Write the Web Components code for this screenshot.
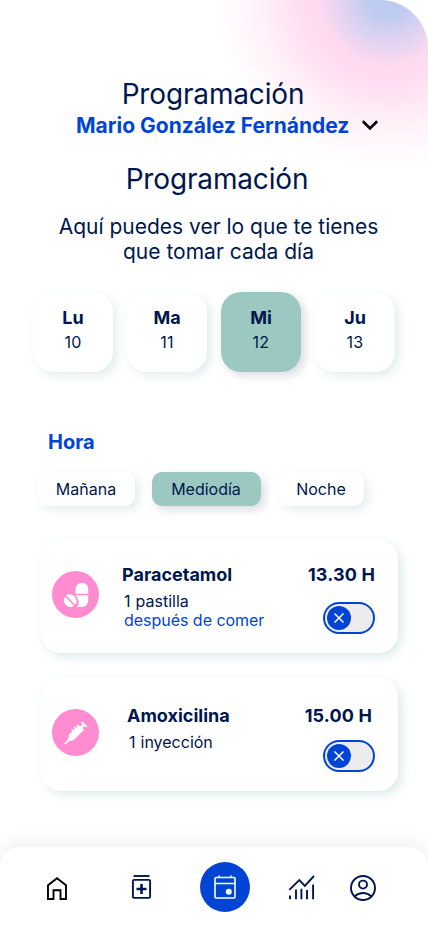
<!DOCTYPE html>
<html lang="es">
<head>
<meta charset="utf-8">
<title>Programación</title>
<style>
html,body{margin:0;padding:0;background:#fff}
body{font-family:Inter,"Liberation Sans",sans-serif;color:#00164e}
</style>
</head>
<body>
<app-screen>
  <app-header heading="Programación" user="Mario González Fernández"></app-header>
  <intro-block heading="Programación">Aquí puedes ver lo que te tienes<br>que tomar cada día</intro-block>
  <day-row>
    <day-card day="Lu" num="10"></day-card>
    <day-card day="Ma" num="11"></day-card>
    <day-card day="Mi" num="12" selected></day-card>
    <day-card day="Ju" num="13"></day-card>
  </day-row>
  <hour-filter label="Hora">
    <hour-chip style="width:97px;margin-right:17px">Mañana</hour-chip>
    <hour-chip selected style="width:109px;margin-right:18px">Mediodía</hour-chip>
    <hour-chip style="width:85px">Noche</hour-chip>
  </hour-filter>
  <dose-list>
    <dose-card name="Paracetamol" time="13.30 H" dose="1 pastilla" note="después de comer" icon="pill"></dose-card>
    <dose-card name="Amoxicilina" time="15.00 H" dose="1 inyección" icon="syringe" style="--name-x:5px;--row-y:28px;--time-pad:26px;--dose-gap:6px"></dose-card>
  </dose-list>
  <nav-bar slot="nav"></nav-bar>
</app-screen>
<script>
class Base extends HTMLElement{
  constructor(){super();this.attachShadow({mode:'open'});}
  connectedCallback(){this.shadowRoot.innerHTML=this.render();}
  at(n){return this.getAttribute(n)||'';}
}
customElements.define('app-screen',class extends Base{render(){return `
<style>
:host{display:flex;flex-direction:column;width:428px;height:926px;overflow:hidden;border-radius:0 48px 0 0;
background:radial-gradient(circle at 388px -4px,#bccaf1 0,#bfcbf1 20px,#ffdaf0 70px,#ffdcf2 84px,#fff2f9 130px,#fff 174px)}
main{flex:1;display:flex;flex-direction:column}
</style><main><slot></slot></main><slot name="nav"></slot>`}});
customElements.define('app-header',class extends Base{render(){return `
<style>
:host{display:block;padding-top:77px}
h1{margin:0;font-size:28px;line-height:34px;font-weight:400;letter-spacing:-.15px;text-align:center;padding-right:2px}
.user{display:flex;align-items:center;margin-top:3px;padding-left:76px;color:#0044d6;font-size:21px;line-height:24px;font-weight:700}
svg{margin:-2px 0 0 12px}
</style><h1>${this.at('heading')}</h1>
<div class="user"><span>${this.at('user')}</span><svg width="18" height="12" viewBox="0 0 18 12" fill="none" stroke="#000" stroke-width="2.7"><path d="M1.8 2.2l7.2 7.2 7.2-7.2"/></svg></div>`}});
customElements.define('intro-block',class extends Base{render(){return `
<style>
:host{display:block;margin-top:24px;text-align:center}
h2{margin:0;font-size:28px;line-height:34px;font-weight:400;letter-spacing:-.15px;padding-left:6px}
p{margin:18px 0 0;font-size:21px;line-height:25px;font-weight:400;padding-left:9px}
</style><h2>${this.at('heading')}</h2><p><slot></slot></p>`}});
customElements.define('day-row',class extends Base{render(){return `
<style>:host{display:flex;gap:14px;margin:28px 0 0 33px}</style><slot></slot>`}});
customElements.define('day-card',class extends Base{render(){return `
<style>
:host{display:block;box-sizing:border-box;width:80px;height:80px;border-radius:20px;background:#fff;padding-top:15px;text-align:center;box-shadow:4px 4px 10px rgba(155,201,193,.3)}
:host([selected]){background:#9bc9c1;box-shadow:4px 4px 10px rgba(0,0,78,.14)}
b{display:block;font-size:18px;line-height:22px;font-weight:700}
span{display:block;font-size:16px;line-height:20px;font-weight:400;letter-spacing:.3px;margin-top:3px}
</style><b>${this.at('day')}</b><span>${this.at('num')}</span>`}});
customElements.define('hour-filter',class extends Base{render(){return `
<style>
:host{display:block;margin:58px 0 0 38px}
h3{margin:0 0 18px 10px;font-size:20px;line-height:24px;font-weight:700;color:#0044d6}
div{display:flex}
</style><h3>${this.at('label')}</h3><div><slot></slot></div>`}});
customElements.define('hour-chip',class extends Base{render(){return `
<style>
:host{display:block;box-sizing:border-box;height:34px;line-height:34px;padding-right:1px;border-radius:10px;background:#fff;text-align:center;font-size:16px;font-weight:400;box-shadow:4px 4px 10px rgba(155,201,193,.3)}
:host([selected]){background:#9bc9c1;box-shadow:4px 4px 10px rgba(0,0,78,.14)}
</style><slot></slot>`}});
customElements.define('dose-list',class extends Base{render(){return `
<style>:host{display:flex;flex-direction:column;gap:24px;margin:33px 30px 0 41px}</style><slot></slot>`}});
const ICONS={
pill:`<svg width="26" height="26" viewBox="0 0 26 26"><path fill="#fff" d="M12.6 11.8V7a6.3 6.3 0 0 1 12.6 0v4.8zM12.6 13.2h12.6v5.6a6.3 6.3 0 0 1-6.3 6.2h-4.8a7.8 7.8 0 0 0-1.5-11.1z"/><path fill="#fff" d="M3 13.6L12.2 22.8A6.6 6.6 0 0 0 3 13.6zM2 14.7L11.1 23.8A6.6 6.6 0 0 1 2 14.7z"/></svg>`,
syringe:`<svg width="26" height="26" viewBox="0 0 26 26"><path fill="#fff" d="M2.2 24.6l-.9-.9 3.9-5 .6-4L9 11.6 16.4 5l4.8 4.8L10.4 20.3l-3.8.6z"/><path fill="none" stroke="#fff" stroke-width="1.5" d="M8.6 9.4l2.6 2.4M11 7l2.6 2.6M13.4 4.8L16 7.4"/><path fill="none" stroke="#fff" stroke-width="3" d="M17.6 8l3.8-3.7"/><path fill="none" stroke="#fff" stroke-width="1.9" d="M18.6 1.8l5.2 5.4"/></svg>`};
customElements.define('dose-card',class extends Base{render(){return `
<style>
:host{display:flex;box-sizing:border-box;height:114px;border-radius:20px;background:#fff;padding-left:11px;box-shadow:4px 4px 10px rgba(155,201,193,.34)}
.disc{width:47px;height:47px;border-radius:50%;background:#ff8bd1;margin-top:32px;display:flex;align-items:center;justify-content:center}
.text{flex:1;margin-left:calc(23px + var(--name-x,0px));padding-top:var(--row-y,25px)}
b{display:block;font-size:18px;line-height:22px;font-weight:700}
.dose,.note{display:block;margin-left:2px;font-size:16px;line-height:19px;font-weight:400}
.dose{margin-top:var(--dose-gap,6px);word-spacing:.5px}
.note{color:#0044d6;letter-spacing:-.03px}
.side{display:flex;flex-direction:column;align-items:flex-end;justify-content:space-between;box-sizing:border-box;padding:var(--row-y,25px) 23px 19px 0}
.side b{letter-spacing:.15px;margin-right:calc(var(--time-pad,23px) - 23px)}
</style>
<div class="disc">${ICONS[this.at('icon')]}</div>
<div class="text"><b>${this.at('name')}</b><span class="dose">${this.at('dose')}</span>${this.at('note')?`<span class="note">${this.at('note')}</span>`:''}</div>
<div class="side"><b>${this.at('time')}</b><toggle-switch></toggle-switch></div>`}});
customElements.define('toggle-switch',class extends Base{render(){return `
<style>
:host{display:flex;align-items:center;box-sizing:border-box;width:52px;height:32px;border:2px solid #0044d6;border-radius:16px;background:#ececec;padding-left:2px}
i{display:flex;width:24px;height:24px;border-radius:50%;background:#0044d6}
</style><i><svg width="24" height="24" viewBox="0 0 24 24" stroke="#fff" stroke-width="1.5"><path d="M7.5 7.5l9 9M16.5 7.5l-9 9"/></svg></i>`}});
customElements.define('nav-bar',class extends Base{render(){return `
<style>
:host{display:grid;height:79px;box-sizing:border-box;background:#fff;border-radius:20px 20px 0 0;box-shadow:0 -4px 20px rgba(0,0,0,.07);padding-top:15px;grid-template-columns:46px 85px 69px 88px 62px 1fr}
a{display:flex;align-items:center;height:50px}
.cell{grid-row:1}
.disc{width:50px;border-radius:50%;background:#0044d6;justify-content:center}
svg{display:block;flex:none}
</style>
<a class="cell" style="grid-column:2;height:52px"><svg width="22" height="26" viewBox="0 0 22 26" fill="none" stroke="#000" stroke-width="1.9"><path d="M2 24V10.3L11 3.2l9 7.1V24h-5.5v-8.7h-7V24z"/></svg></a>
<a class="cell" style="grid-column:3"><svg width="21" height="26" viewBox="0 0 21 26" fill="none" stroke="#00164e" stroke-width="1.9"><path d="M2.5 2h16"/><rect x="1.9" y="5.9" width="17.2" height="18" rx="1.2"/><path d="M10.5 10v10M5.5 15h10" stroke-width="2.6"/></svg></a>
<a class="cell disc" style="grid-column:4"><svg width="24" height="26" viewBox="0 0 24 26" fill="none" stroke="#fff" stroke-width="1.6"><rect x="2" y="3.5" width="20" height="20.5" rx="1"/><path d="M2 9.5h20M6.2 1.5v2M17.8 1.5v2"/><circle cx="15.8" cy="17.8" r="3" fill="#fff" stroke="none"/></svg></a>
<a class="cell" style="grid-column:5"><svg width="27" height="26" viewBox="0 0 27 26" fill="none" stroke="#00164e"><path d="M1.3 15.9L11.3 6l5.5 5.8L26 2" stroke-width="1.9"/><path d="M2 25.2v-3.6M8 25.2V15.4M13.4 25.2V14.8M19 25.2V16M25.1 25.2V10.4" stroke-width="1.9"/></svg></a>
<a class="cell" style="grid-column:6;height:52px"><svg width="26" height="26" viewBox="0 0 26 26" fill="none" stroke="#00164e" stroke-width="1.9"><circle cx="13" cy="13" r="12"/><circle cx="13" cy="9.6" r="4"/><path d="M4.7 21.4Q8.4 18 13 18t8.3 3.4"/></svg></a>`}});
</script>
</body>
</html>
